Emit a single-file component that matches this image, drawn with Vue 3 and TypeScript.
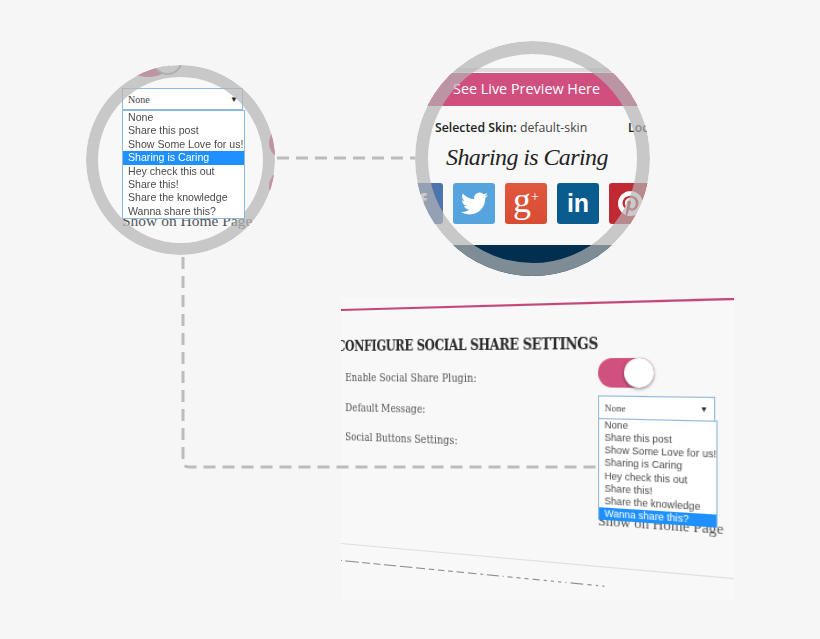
<script setup lang="ts">
const options: string[] = [
  'None',
  'Share this post',
  'Show Some Love for us!',
  'Sharing is Caring',
  'Hey check this out',
  'Share this!',
  'Share the knowledge',
  'Wanna share this?',
]
const dashes: number[] = [1, 16, 9, 8, 14, 14, 10, 6, 7, 5, 8, 9, 3, 12, 1, 5, 4, 4, 7, 3, 3, 3, 1, 12, 4, 2, 2]
</script>

<template>
  <div class="scene">
    <section class="lens lens-a">
      <i class="blob blob-top"></i>
      <i class="knob"></i>
      <i class="blob blob-r1"></i>
      <i class="blob blob-r2"></i>
      <div class="a-body">
        <div class="select a-select"><span>None</span><b>▼</b></div>
        <ul class="list a-list">
          <li v-for="o in options" :key="o" :class="{ on: o === 'Sharing is Caring' }">{{ o }}</li>
        </ul>
        <p class="a-home">Show on Home Page</p>
      </div>
      <i class="ring"></i>
    </section>

    <section class="lens lens-b">
      <div class="b-rule"></div>
      <div class="b-cta">See Live Preview Here</div>
      <div class="b-skin"><span><b>Selected Skin:</b> default-skin</span><b>Loc</b></div>
      <div class="b-script">Sharing is Caring</div>
      <div class="b-icons">
        <div class="ico fb">f</div>
        <div class="ico tw">
          <svg viewBox="0 0 24 24" width="27" height="27"><path fill="#fff" d="M23.953 4.57a10 10 0 01-2.825.775 4.958 4.958 0 002.163-2.723c-.951.555-2.005.959-3.127 1.184a4.92 4.92 0 00-8.384 4.482C7.69 8.095 4.067 6.13 1.64 3.162a4.822 4.822 0 00-.666 2.475c0 1.71.87 3.213 2.188 4.096a4.904 4.904 0 01-2.228-.616v.06a4.923 4.923 0 003.946 4.827 4.996 4.996 0 01-2.212.085 4.936 4.936 0 004.604 3.417 9.867 9.867 0 01-6.102 2.105c-.39 0-.779-.023-1.17-.067a13.995 13.995 0 007.557 2.209c9.053 0 13.998-7.496 13.998-13.985 0-.21 0-.42-.015-.63A9.935 9.935 0 0024 4.59z" /></svg>
        </div>
        <div class="ico gp"><span>g</span><sup>+</sup></div>
        <div class="ico li">in</div>
        <div class="ico pi">
          <svg viewBox="0 0 24 24" width="25" height="25"><path fill="#fff" d="M12.017 0C5.396 0 .029 5.367.029 11.987c0 5.079 3.158 9.417 7.618 11.162-.105-.949-.199-2.403.041-3.439.219-.937 1.406-5.957 1.406-5.957s-.359-.72-.359-1.781c0-1.663.967-2.911 2.168-2.911 1.024 0 1.518.769 1.518 1.688 0 1.029-.653 2.567-.992 3.992-.285 1.193.6 2.165 1.775 2.165 2.128 0 3.768-2.245 3.768-5.487 0-2.861-2.063-4.869-5.008-4.869-3.41 0-5.409 2.562-5.409 5.199 0 1.033.394 2.143.889 2.741.099.12.112.225.085.345-.09.375-.293 1.199-.334 1.363-.053.225-.172.271-.401.165-1.495-.69-2.433-2.878-2.433-4.646 0-3.776 2.748-7.252 7.92-7.252 4.158 0 7.392 2.967 7.392 6.923 0 4.135-2.607 7.462-6.233 7.462-1.214 0-2.354-.629-2.758-1.379l-.749 2.848c-.269 1.045-1.004 2.352-1.498 3.146 1.123.345 2.306.535 3.55.535 6.607 0 11.985-5.365 11.985-11.987C23.97 5.39 18.592.026 11.985.026L12.017 0z" /></svg>
        </div>
      </div>
      <div class="b-navy"></div>
      <i class="ring ring-b"></i>
    </section>

    <section class="panel">
      <div class="sheet">
        <div class="rule"></div>
        <h2>CONFIGURE SOCIAL SHARE SETTINGS</h2>
        <div class="row">
          <label>Enable Social Share Plugin:</label>
          <div class="toggle"><i></i></div>
        </div>
        <div class="row">
          <label>Default Message:</label>
          <div class="drop">
            <div class="select c-select"><span>None</span><b>▼</b></div>
            <ul class="list c-list">
              <li v-for="o in options" :key="o" :class="{ on: o === 'Wanna share this?' }">{{ o }}</li>
            </ul>
            <p class="c-home">Show on Home Page</p>
          </div>
        </div>
        <div class="row"><label>Social Buttons Settings:</label></div>
        <div class="divider"></div>
        <div class="ghost">
          <i v-for="(d, n) in dashes" :key="n" :style="{ width: d + 'px' }"></i>
        </div>
      </div>
    </section>

    <svg class="links" width="820" height="639" viewBox="0 0 820 639" aria-hidden="true">
      <path d="M277 158H415M183 257V461Q183 467 189 467H598" />
    </svg>
  </div>
</template>

<style scoped>
.scene {
  position: relative;
  width: 820px;
  height: 639px;
  overflow: hidden;
  background: #f6f6f6;
}
.links {
  position: absolute;
  left: 0;
  top: 0;
}
.links path {
  fill: none;
  stroke: #bcbcbc;
  stroke-width: 3;
  stroke-dasharray: 12 7;
}
.lens {
  position: absolute;
  box-sizing: border-box;
  border-radius: 50%;
  overflow: hidden;
  background: #f8f8f8;
}
.ring {
  position: absolute;
  inset: 0;
  z-index: 1;
  box-sizing: border-box;
  border: 12px solid rgba(179, 179, 179, 0.7);
  border-radius: 50%;
}
.ring-b {
  border-width: 13px;
}
.lens-a {
  left: 86px;
  top: 65px;
  width: 189px;
  height: 190px;
}
.blob {
  position: absolute;
  border-radius: 50%;
  background: #d0507f;
}
.blob-top {
  left: 40px;
  top: -16px;
  width: 44px;
  height: 28px;
}
.knob {
  position: absolute;
  left: 66px;
  top: -22px;
  width: 31px;
  height: 32px;
  box-sizing: border-box;
  border-radius: 50%;
  border: 2px solid #a9a9a9;
  background: #f8f8f8;
}
.blob-r1 {
  left: 183px;
  top: 62px;
  width: 32px;
  height: 32px;
}
.blob-r2 {
  left: 183px;
  top: 105px;
  width: 32px;
  height: 32px;
}
.a-body {
  position: relative;
  padding: 23px 0 0 36px;
}
.select {
  display: flex;
  align-items: center;
  justify-content: space-between;
  box-sizing: border-box;
  background: #fff;
  border: 1px solid #8fb8dc;
  color: #444;
  font-family: "Liberation Serif", serif;
}
.select b {
  color: #222;
  font-weight: 400;
}
.a-select {
  width: 121px;
  height: 22px;
  padding: 0 4px 0 5px;
  font-size: 10px;
}
.a-select b {
  font-size: 8px;
}
.list {
  position: relative;
  z-index: 2;
  box-sizing: border-box;
  margin: 0;
  padding: 0;
  list-style: none;
  background: #fff;
  border: 1px solid #8fb8dc;
  color: #4a4a4a;
  font-family: "Liberation Sans", sans-serif;
}
.list .on {
  background: #1e90ff;
  color: #fff;
}
.a-list {
  width: 123px;
  font-size: 10.6px;
  line-height: 13.4px;
  filter: blur(0.25px);
}
.a-list li {
  padding-left: 5px;
  white-space: nowrap;
}
.a-home {
  width: 140px;
  margin: -7px 0 0;
  color: #555;
  font: 15.5px/18px "Liberation Serif", serif;
}
.lens-b {
  left: 415px;
  top: 41px;
  width: 235px;
  height: 235px;
  display: flex;
  flex-direction: column;
}
.b-rule {
  height: 4px;
  margin-top: 27px;
  background: #dcdcdc;
}
.b-cta {
  height: 33px;
  margin-top: 1px;
  padding-left: 38px;
  background: #d04f7f;
  color: #fff;
  font: 14.4px/31px "Open Sans", sans-serif;
}
.b-skin {
  display: flex;
  justify-content: space-between;
  height: 17px;
  margin-top: 13px;
  padding-left: 20px;
  color: #444;
  font: 12.3px/17px "Open Sans", sans-serif;
  white-space: nowrap;
}
.b-skin b {
  color: #222;
  font-weight: 600;
}
.b-skin > b {
  width: 22px;
}
.b-script {
  height: 34px;
  margin-top: 4px;
  padding-left: 31px;
  color: #222;
  font: italic 24px/34px "Liberation Serif", serif;
  letter-spacing: -0.6px;
  white-space: nowrap;
}
.b-icons {
  display: flex;
  gap: 10px;
  margin-top: 9px;
  margin-left: -14px;
}
.ico {
  display: flex;
  flex: none;
  align-items: center;
  justify-content: center;
  width: 42px;
  height: 41px;
  border-radius: 3px;
  color: #fff;
}
.fb {
  background: #4e74ad;
  font: 700 28px "Liberation Sans", sans-serif;
}
.tw {
  background: #55a4dd;
}
.gp {
  background: linear-gradient(#e0583f, #d94c33);
  font: 400 36px/36px "Liberation Serif", serif;
}
.gp span {
  margin-top: -8px;
}
.gp sup {
  align-self: flex-start;
  margin-top: 7px;
  font-size: 14px;
  line-height: 14px;
}
.li {
  background: #0b5c8e;
  font: 700 25px "Liberation Sans", sans-serif;
}
.pi {
  background: #c22a33;
}
.b-navy {
  flex: 1;
  margin-top: 21px;
  background: #022f50;
}
.panel {
  position: absolute;
  left: 341px;
  top: 298px;
  width: 393px;
  height: 302px;
  overflow: hidden;
  background: #f8f8f8;
}
.sheet {
  width: 470px;
  height: 302px;
  padding-top: 11px;
  box-sizing: border-box;
  transform-origin: 0 0;
  transform: matrix3d(0.84, -0.02869, 0, -0.000422, 0, 1, 0, 0, 0, 0, 1, 0, 0, 0, 0, 1);
  filter: blur(0.25px);
}
.rule {
  height: 2px;
  background: #c4477a;
}
h2 {
  height: 20px;
  margin: 25px 0 0 -5px;
  color: #2a2a2a;
  font: 700 14.4px/20px "DejaVu Serif Condensed", "DejaVu Serif", serif;
  letter-spacing: -0.45px;
  white-space: nowrap;
}
h2 + .row {
  margin-top: 7px;
}
.row {
  display: flex;
  align-items: flex-start;
  height: 29.5px;
}
label {
  flex: none;
  box-sizing: border-box;
  width: 271px;
  padding-left: 5px;
  color: #555;
  font: 11.5px/29.5px "DejaVu Serif Condensed", "DejaVu Serif", serif;
}
.toggle {
  display: flex;
  justify-content: flex-end;
  box-sizing: border-box;
  width: 51px;
  height: 26px;
  margin-top: -4px;
  border-radius: 13px;
  background: #d0507f;
}
.toggle i {
  width: 27px;
  height: 26px;
  border-radius: 50%;
  background: #fff;
  box-shadow: 0 1px 3px rgba(0, 0, 0, 0.45);
}
.drop {
  position: relative;
  margin-top: -0.5px;
}
.c-select {
  width: 104px;
  height: 21px;
  padding: 0 5px;
  font-size: 9px;
}
.c-select b {
  font-size: 7px;
}
.c-list {
  position: absolute;
  left: 0;
  top: 20px;
  width: 106px;
  border-bottom: 0;
  font-size: 9.1px;
  line-height: 11.15px;
}
.c-list li {
  padding-left: 5px;
  white-space: nowrap;
}
.c-home {
  position: absolute;
  left: 0;
  top: 103px;
  margin: 0;
  color: #555;
  font: 13.2px/16px "Liberation Serif", serif;
  white-space: nowrap;
}
.divider {
  height: 1px;
  margin-top: 91px;
  background: #dedede;
}
.ghost {
  display: flex;
  gap: 4px;
  margin-top: 16px;
  width: 280px;
}
.ghost i {
  flex: none;
  height: 1px;
  background: #888;
}
</style>

<style>
html,
body {
  background: #f6f6f6;
}
</style>
